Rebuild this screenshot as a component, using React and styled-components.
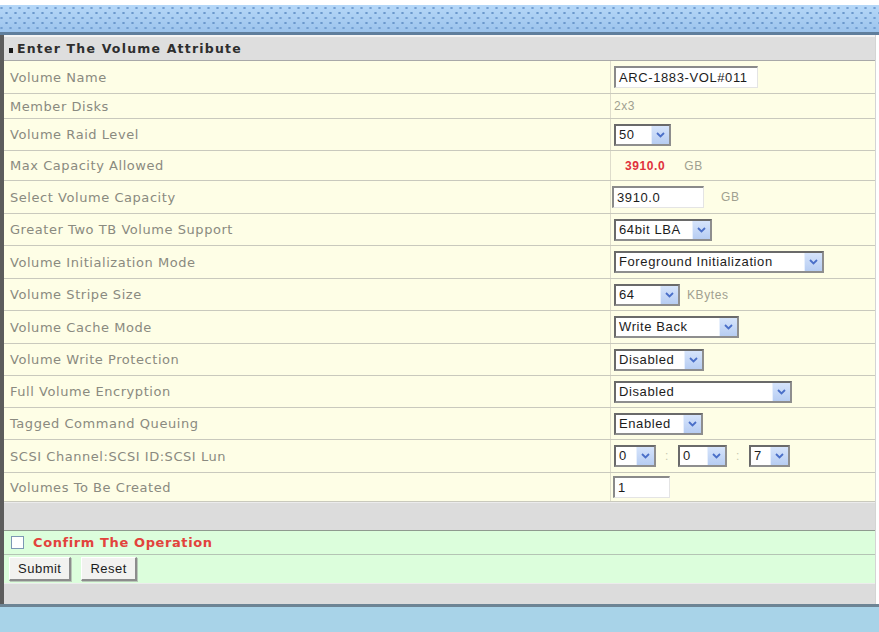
import React from 'react';
import styled, { createGlobalStyle } from 'styled-components';

const GlobalStyle = createGlobalStyle`
  html, body {
    margin: 0;
    padding: 0;
    background: #ffffff;
  }
  body {
    font-family: "DejaVu Sans", Verdana, sans-serif;
  }
`;

const Page = styled.div`
  width: 879px;
  height: 632px;
  overflow: hidden;
  display: flex;
  flex-direction: column;
  background: #ffffff;
`;

const TopGap = styled.div`
  height: 5px;
  flex: none;
`;

const Banner = styled.div`
  height: 27px;
  flex: none;
  background-color: #a9cff3;
  background-image:
    radial-gradient(circle, #6b98cc 0.9px, transparent 1.5px),
    radial-gradient(circle, #739fd2 0.9px, transparent 1.5px),
    linear-gradient(#b6d8f8, #9cc3ec);
  background-size: 9px 10px, 9px 10px, 100% 100%;
  background-position: 2px 3px, 6px 8px, 0 0;
`;

const Rule = styled.div`
  height: ${(p) => p.$h}px;
  flex: none;
  background: ${(p) => p.$color};
`;

const Frame = styled.div`
  width: 871px;
  flex: none;
  border-left: 4px solid #5c5c5c;
  border-right: 1px solid #d4d4d4;
  display: flex;
  flex-direction: column;
`;

const Header = styled.div`
  height: 26px;
  box-sizing: border-box;
  display: flex;
  align-items: center;
  gap: 4px;
  padding-left: 5px;
  background: #dedede;
  border-top: 2px solid #f4f4f4;
  border-bottom: 1px solid #a8a8a8;
  font-size: 12.5px;
  font-weight: bold;
  letter-spacing: 1.2px;
  color: #2e2e2e;
`;

const Bullet = styled.span`
  width: 4px;
  height: 5px;
  margin-top: 4px;
  background: #1a1a1a;
`;

const Row = styled.div`
  display: grid;
  grid-template-columns: 607px 1fr;
  height: ${(p) => p.$h}px;
  box-sizing: border-box;
  background: #fefee6;
  border-bottom: 1px solid #c9c9bd;
`;

const LabelCell = styled.div`
  display: flex;
  align-items: center;
  padding-left: 6px;
  font-size: 13px;
  letter-spacing: 0.55px;
  color: #8a8a80;
  border-right: 1px solid #dedccb;
`;

const ValueCell = styled.div`
  display: flex;
  align-items: center;
  gap: ${(p) => p.$gap || 7}px;
  padding-left: ${(p) => p.$pad ?? 3}px;
  font-family: "Liberation Sans", Arial, sans-serif;
  font-size: 13px;
  letter-spacing: 0.6px;
  color: #1c1c1c;
`;

const TextBox = styled.div`
  width: ${(p) => p.$w}px;
  height: 22px;
  box-sizing: border-box;
  display: flex;
  align-items: center;
  padding-left: 3px;
  background: #ffffff;
  border-style: solid;
  border-width: 2px 1px 1px 2px;
  border-color: #8a8a8a #e4e4e4 #e4e4e4 #8a8a8a;
  color: #1c1c1c;
`;

const SelectBox = styled.div`
  width: ${(p) => p.$w}px;
  height: 22px;
  box-sizing: border-box;
  display: flex;
  background: #ffffff;
  border: 2px solid;
  border-color: #6a6a6a #8e8e8e #8e8e8e #6a6a6a;
`;

const SelectText = styled.span`
  flex: 1;
  padding-left: 3px;
  line-height: 18px;
  white-space: nowrap;
  overflow: hidden;
`;

const ArrowButton = styled.span`
  width: 17px;
  display: flex;
  align-items: center;
  justify-content: center;
  background: linear-gradient(#d6e4fb, #b7cdf2);
  border-left: 1px solid #e8f0fc;
`;

const Muted = styled.span`
  color: #a0a090;
  font-size: 12px;
  margin-left: ${(p) => p.$ml || 0}px;
`;

const Capacity = styled.span`
  color: #e0313c;
  font-weight: bold;
  font-size: 12px;
  margin-left: 11px;
`;

const Colon = styled.span`
  color: #c8c8b0;
  font-size: 12px;
`;

const Band = styled.div`
  height: ${(p) => p.$h}px;
  background: #dcdcdc;
  border-top: 1px solid #ececec;
`;

const GreenRow = styled.div`
  height: ${(p) => p.$h}px;
  box-sizing: border-box;
  display: flex;
  align-items: center;
  gap: ${(p) => p.$gap || 0}px;
  padding-left: 5px;
  background: #dcfedc;
  border-top: 1px solid ${(p) => p.$line};
`;

const Check = styled.span`
  width: 13px;
  height: 13px;
  box-sizing: border-box;
  border: 1px solid #7c98b4;
  background: #ffffff;
  margin: 0 9px 0 2px;
`;

const ConfirmText = styled.span`
  font-size: 13px;
  font-weight: bold;
  letter-spacing: 0.6px;
  color: #e2433c;
`;

const Button = styled.button`
  height: 24px;
  padding: 0 8px;
  font-family: "Liberation Sans", Arial, sans-serif;
  font-size: 13px;
  letter-spacing: 0.5px;
  color: #1c1c1c;
  background: #f2f2f0;
  border-style: solid;
  border-width: 1px 2px 2px 1px;
  border-color: #ffffff #8c8c8c #8c8c8c #ffffff;
  box-shadow: 1px 1px 0 #b8c8b8;
`;

const BottomBlue = styled.div`
  flex: 1;
  background: #a8d3e8;
`;

function Chevron() {
  return (
    <svg width="9" height="6" viewBox="0 0 9 6">
      <path d="M1 1 L4.5 4.5 L8 1" fill="none" stroke="#4a6fc8" strokeWidth="1.8" />
    </svg>
  );
}

function Select({ width, value }) {
  return (
    <SelectBox $w={width}>
      <SelectText>{value}</SelectText>
      <ArrowButton>
        <Chevron />
      </ArrowButton>
    </SelectBox>
  );
}

const rows = [
  {
    label: 'Volume Name',
    h: 33,
    value: <TextBox $w={144}>ARC-1883-VOL#011</TextBox>,
  },
  { label: 'Member Disks', h: 25, value: <Muted>2x3</Muted> },
  { label: 'Volume Raid Level', h: 32, value: <Select width={57} value="50" /> },
  {
    label: 'Max Capacity Allowed',
    h: 30,
    value: (
      <>
        <Capacity>3910.0</Capacity>
        <Muted $ml={12}>GB</Muted>
      </>
    ),
  },
  {
    label: 'Select Volume Capacity',
    h: 33,
    pad: 1,
    value: (
      <>
        <TextBox $w={92}>3910.0</TextBox>
        <Muted $ml={10}>GB</Muted>
      </>
    ),
  },
  { label: 'Greater Two TB Volume Support', h: 32, value: <Select width={98} value="64bit LBA" /> },
  {
    label: 'Volume Initialization Mode',
    h: 33,
    value: <Select width={210} value="Foreground Initialization" />,
  },
  {
    label: 'Volume Stripe Size',
    h: 32,
    value: (
      <>
        <Select width={66} value="64" />
        <Muted>KBytes</Muted>
      </>
    ),
  },
  { label: 'Volume Cache Mode', h: 33, value: <Select width={125} value="Write Back" /> },
  { label: 'Volume Write Protection', h: 32, value: <Select width={90} value="Disabled" /> },
  { label: 'Full Volume Encryption', h: 32, value: <Select width={178} value="Disabled" /> },
  { label: 'Tagged Command Queuing', h: 32, value: <Select width={89} value="Enabled" /> },
  {
    label: 'SCSI Channel:SCSI ID:SCSI Lun',
    h: 33,
    gap: 9,
    value: (
      <>
        <Select width={42} value="0" />
        <Colon>:</Colon>
        <Select width={49} value="0" />
        <Colon>:</Colon>
        <Select width={41} value="7" />
      </>
    ),
  },
  { label: 'Volumes To Be Created', h: 29, pad: 2, value: <TextBox $w={57}>1</TextBox> },
];

export default function App() {
  return (
    <Page>
      <GlobalStyle />
      <TopGap />
      <Banner />
      <Rule $h={3} $color="#5f7e9c" />
      <Frame>
        <Header>
          <Bullet />
          Enter The Volume Attribute
        </Header>
        {rows.map((row) => (
          <Row key={row.label} $h={row.h}>
            <LabelCell>{row.label}</LabelCell>
            <ValueCell $pad={row.pad} $gap={row.gap}>
              {row.value}
            </ValueCell>
          </Row>
        ))}
        <Band $h={27} />
        <GreenRow $h={24} $line="#8f9a8f">
          <Check />
          <ConfirmText>Confirm The Operation</ConfirmText>
        </GreenRow>
        <GreenRow $h={29} $gap={10} $line="#b4c4b4">
          <Button>Submit</Button>
          <Button>Reset</Button>
        </GreenRow>
        <Band $h={20} />
      </Frame>
      <Rule $h={3} $color="#6d8494" />
      <BottomBlue />
    </Page>
  );
}
